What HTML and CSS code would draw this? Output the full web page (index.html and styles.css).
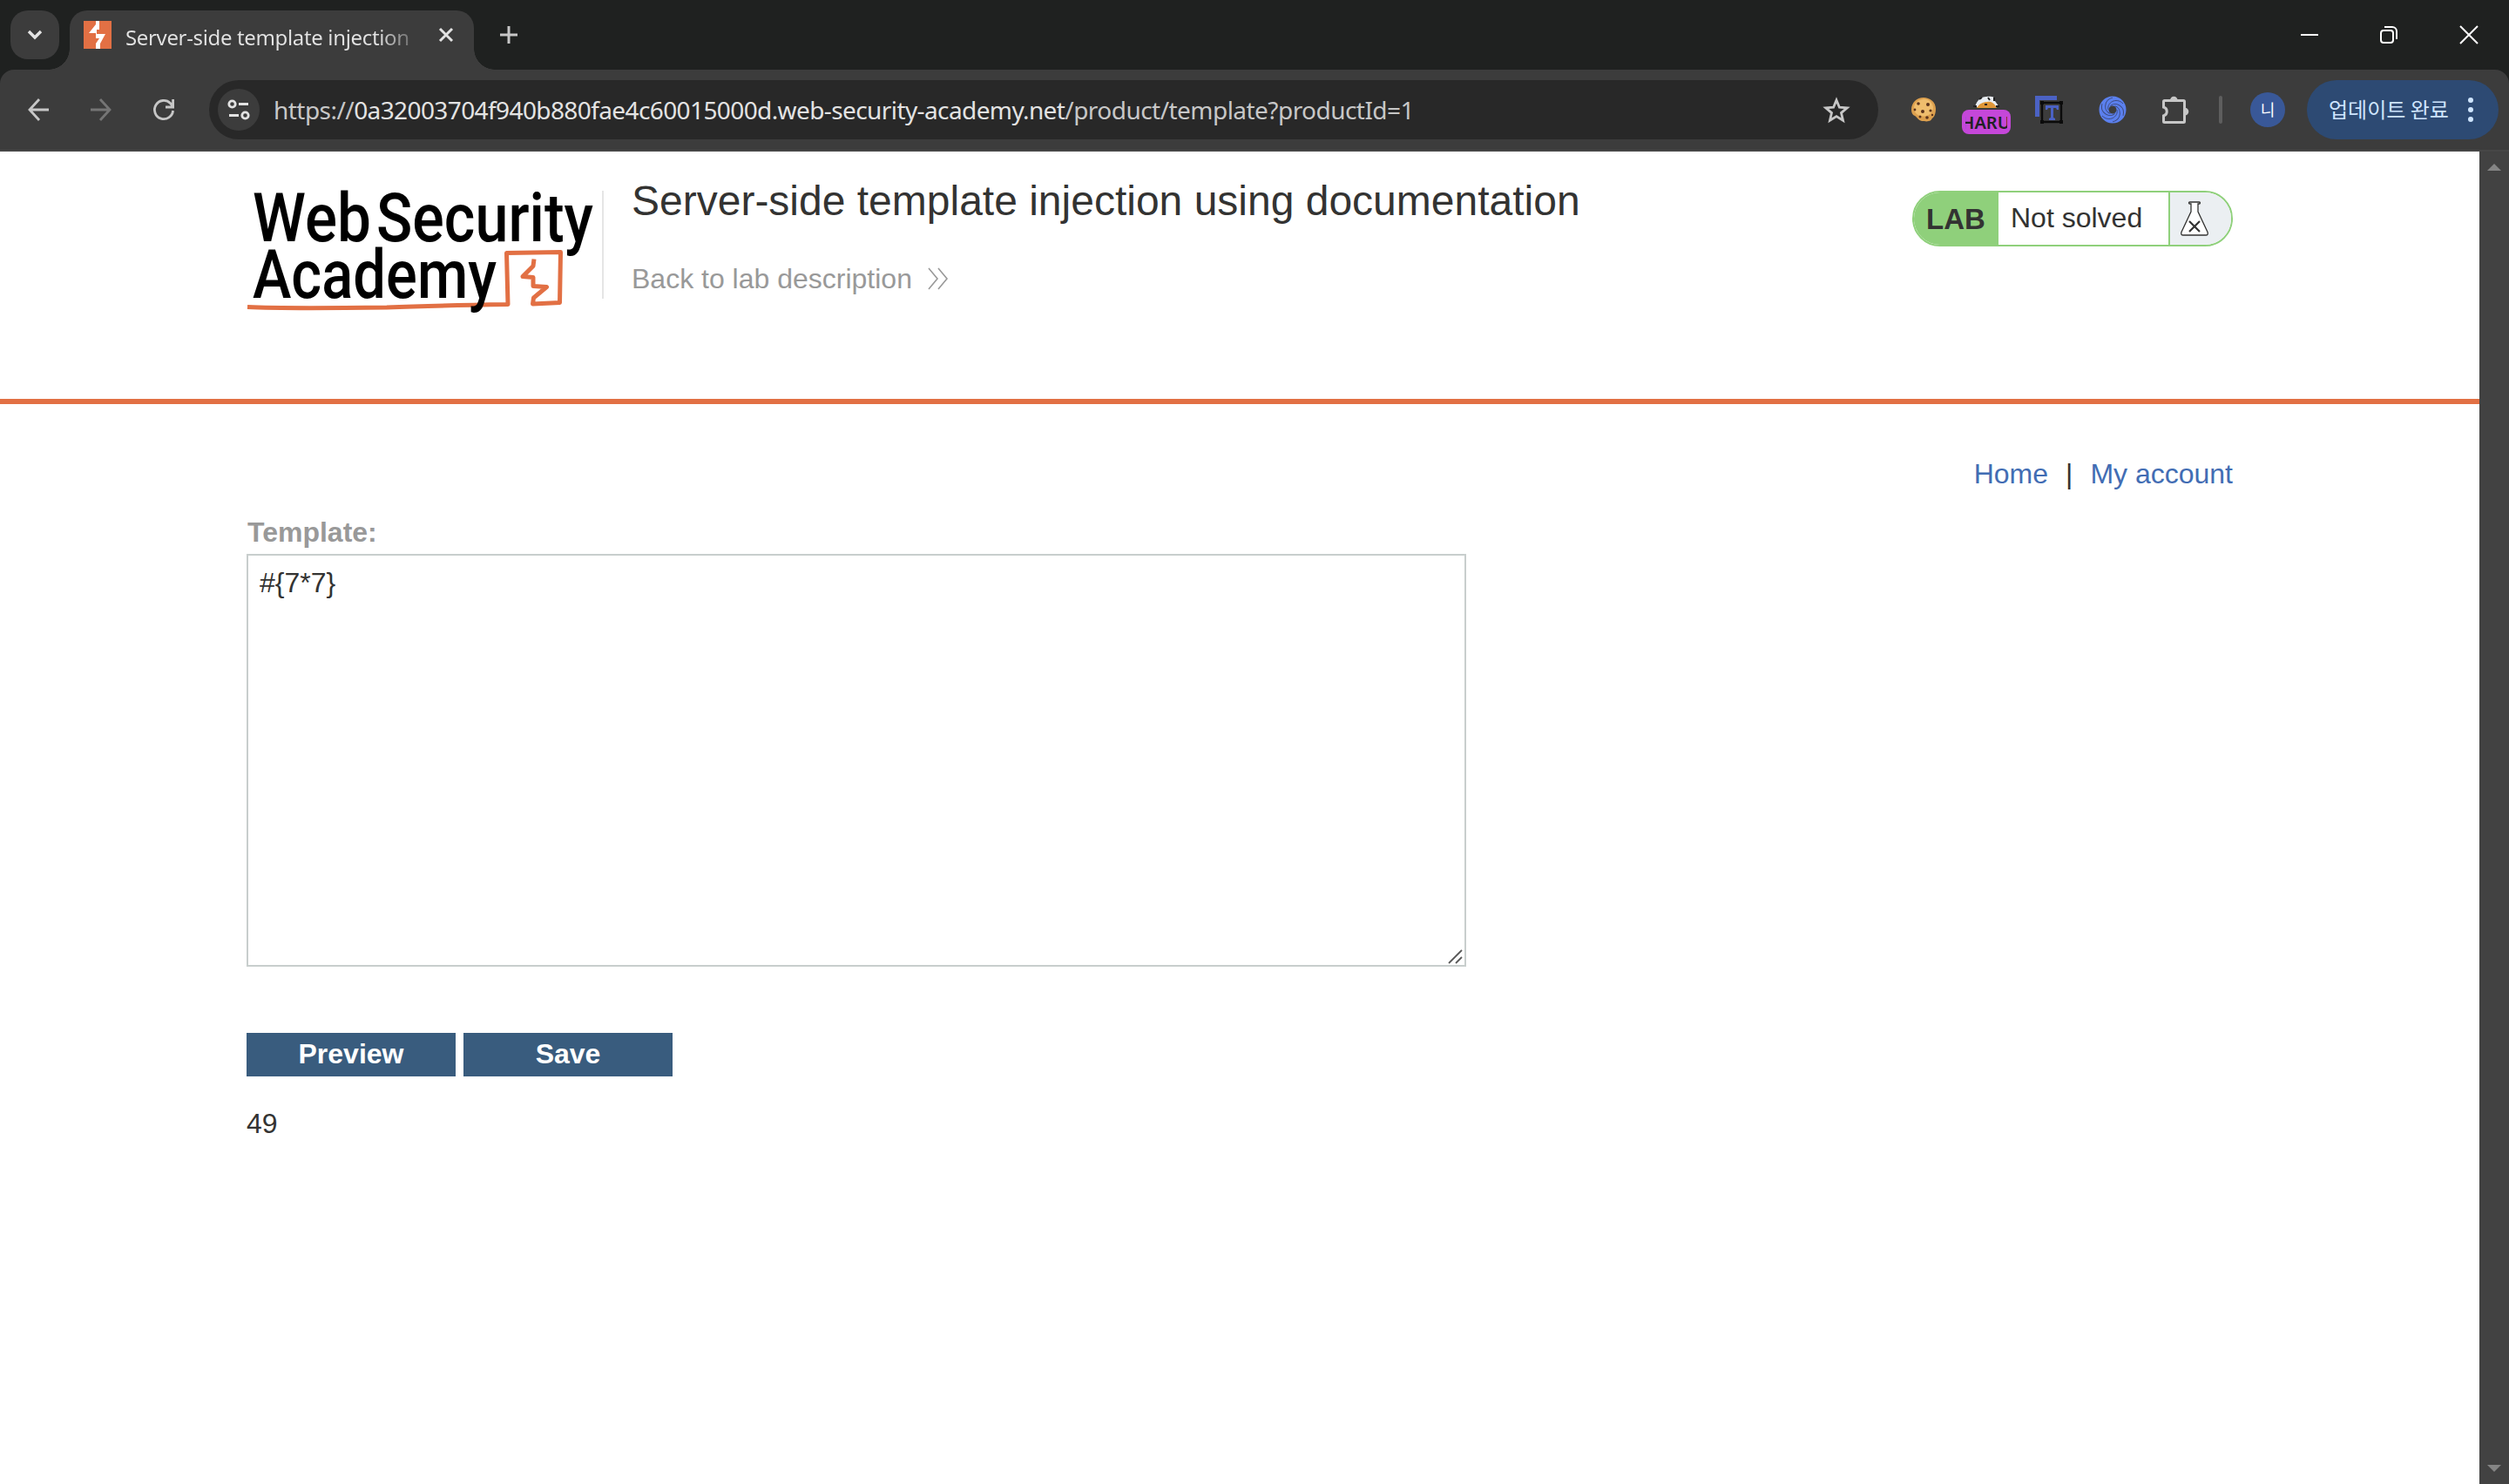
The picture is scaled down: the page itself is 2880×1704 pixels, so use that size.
FILE: index.html
```html
<!DOCTYPE html>
<html lang="en">
  <head>
    <meta charset="UTF-8" />
    <title>Server-side template injection using documentation</title>
    <link rel="stylesheet" href="styles.css">
  </head>
  <body>
    <div class="titlebar">
      <div class="tab-search">
        <svg width="20" height="14" viewBox="0 0 20 14"><path d="M3 3l7 7 7-7" fill="none" stroke="#e3e3e3" stroke-width="3.4" /></svg>
      </div>
      <div class="tab">
        <svg class="favicon" width="32" height="32" viewBox="0 0 32 32">
          <rect width="32" height="32" fill="#e27044" />
          <path d="M14 0h4v10h-3v5h10l-6 11v6h-5v-6l4-6h-4v-6H6l8-10z" fill="#fff" />
        </svg>
        <span class="tab-title">Server-side template injection</span>
        <svg class="tab-close" width="16" height="16" viewBox="0 0 16 16"><path d="M1 1l14 14M15 1L1 15" stroke="#e3e3e3" stroke-width="3" /></svg>
      </div>
      <svg class="new-tab" width="20" height="20" viewBox="0 0 20 20"><path d="M10 0v20M0 10h20" stroke="#c7c7c7" stroke-width="3" /></svg>
      <div class="window-buttons">
        <svg width="20" height="20" viewBox="0 0 20 20"><path d="M1 10h20" stroke="#fff" stroke-width="2" /></svg>
        <svg width="20" height="20" viewBox="0 0 20 20" fill="none" stroke="#fff" stroke-width="2">
          <rect x="1" y="5" width="14" height="14" rx="3" />
          <path d="M5 1h9a5 5 0 0 1 5 5v9" />
        </svg>
        <svg width="20" height="20" viewBox="0 0 20 20"><path d="M0 0l20 20M20 0L0 20" stroke="#fff" stroke-width="2" /></svg>
      </div>
    </div>

    <div class="toolbar-wrap">
      <div class="toolbar">
        <div class="nav-buttons">
          <svg width="24" height="28" viewBox="0 0 24 28" fill="none" stroke="#c7c7c7" stroke-width="2.8"><path d="M24 14H2M13 2L2 14l11 12" /></svg>
          <svg width="24" height="28" viewBox="0 0 24 28" fill="none" stroke="#757575" stroke-width="2.8"><path d="M0 14h22M11 2l11 12-11 12" /></svg>
          <svg width="24" height="24" viewBox="0 0 24 24" fill="none" stroke="#c7c7c7" stroke-width="2.8"><path d="M22.600 13A10.600 10.600 0 1 1 19.500 4.500L22.500 8M22.600 0v9H14" /></svg>
        </div>
        <div class="omnibox">
          <div class="site-info">
            <svg width="26" height="24" viewBox="0 0 26 24" fill="none" stroke="#e3e3e3" stroke-width="2.8">
              <circle cx="5.500" cy="5.500" r="3.700" />
              <path d="M13 5.500h11M2 18.500h11" />
              <circle cx="20.500" cy="18.500" r="3.700" />
            </svg>
          </div>
          <span class="url">https://<b>0a32003704f940b880fae4c60015000d.web-security-academy.net</b>/product/template?productId=1</span>
          <svg class="star" width="32" height="30" viewBox="0 0 32 30"><path d="M16 4l3.400 8.200 8.800.7-6.700 5.700 2 8.600L16 22.600l-7.500 4.600 2-8.600-6.700-5.700 8.800-.7z" fill="none" stroke="#c7c7c7" stroke-width="2.8" /></svg>
        </div>
        <div class="extensions">
          <svg width="30" height="30" viewBox="0 0 30 30">
            <path d="M15 1c7 0 14 5 14 13 0 4-1 8-3 10-2 1-2 4-5 4-3 1-5 0-8 0-4-1-5-4-8-6-3-1-4-4-4-7C1 7 7 1 15 1z" fill="#dda04e" />
            <path d="M14 3c6-1 11 3 12 9 0 5-3 9-8 10-7 2-14-2-14-9 0-5 4-9 10-10z" fill="#efbd6d" />
            <g fill="#5b331c">
              <circle cx="9" cy="8" r="1.800" /><circle cx="20" cy="9" r="2" /><circle cx="5" cy="15" r="1.400" /><circle cx="14" cy="17" r="2" />
              <circle cx="23" cy="16" r="1.600" /><circle cx="11" cy="23" r="1.500" /><circle cx="19" cy="24" r="1.800" /><circle cx="25" cy="21" r="1.200" />
            </g>
          </svg>
          <div class="badged">
            <svg width="32" height="16" viewBox="0 0 32 16">
              <path d="M3 13C5 5 10 1 16 1c6-1 10 0 10 5l5 7z" fill="#e9edf2" />
              <path d="M5 14c3-5 7-7 12-7 5-1 9 2 11 7z" fill="#df9637" />
              <path d="M8 4l3-2M18 2l2 3M25 2v4M27 12h4M1 12h4M14 10h3" stroke="#222" stroke-width="2" />
            </svg>
            <span class="badge"><span>HARU</span></span>
          </div>
          <svg width="32" height="32" viewBox="0 0 32 32">
            <path d="M0 0h25v5H5v19H0z" fill="#4b62c4" />
            <path d="M12 11h15v5h-2l-1-2h-3v11l2 1v2h-7v-2l2-1V14h-3l-1 2h-2z" fill="#4b62c4" />
            <path d="M8 8h22v22H8z" fill="none" stroke="#0b0b0b" stroke-width="2.400" />
            <path d="M6 6h4v4H6zM28 6h4v4h-4zM6 28h4v4H6zM28 28h4v4h-4z" fill="#0b0b0b" />
          </svg>
          <svg width="32" height="32" viewBox="0 0 32 32">
            <circle cx="16" cy="16" r="10" fill="none" stroke="#5b80ee" stroke-width="11" />
            <g fill="none" stroke="#3b4574" stroke-width="0.900">
              <path id="arm" d="M11 16C9 8 20 1 28 9" />
              <use href="#arm" transform="rotate(60 16 16)" />
              <use href="#arm" transform="rotate(120 16 16)" />
              <use href="#arm" transform="rotate(180 16 16)" />
              <use href="#arm" transform="rotate(240 16 16)" />
              <use href="#arm" transform="rotate(300 16 16)" />
            </g>
          </svg>
          <svg width="32" height="32" viewBox="0 0 32 32">
            <path d="M3.500 5.500h22a1 1 0 0 1 1 1v23a1 1 0 0 1-1 1h-22a1 1 0 0 1-1-1v-6.500a5.200 5.200 0 0 0 0-10v-6.500a1 1 0 0 1 1-1z" fill="none" stroke="#c7c7c7" stroke-width="3" />
            <path d="M10 5a4.300 4.300 0 0 1 8.600 0zM27 13.800a4.300 4.300 0 0 1 0 8.600z" fill="#c7c7c7" />
          </svg>
        </div>
        <div class="separator"></div>
        <div class="avatar">니</div>
        <div class="update">
          <span>업데이트 완료</span>
          <svg width="6" height="28" viewBox="0 0 6 28" fill="#cfe5ff"><circle cx="3" cy="3" r="3" /><circle cx="3" cy="14" r="3" /><circle cx="3" cy="25" r="3" /></svg>
        </div>
      </div>
    </div>

    <div class="viewport">
      <div class="page">
        <div class="academy-header">
          <svg class="logo" width="408" height="150" viewBox="283 210 408 150">
            <g class="logo-text">
              <text x="290" y="277" textLength="136" lengthAdjust="spacingAndGlyphs">Web</text>
              <text x="432" y="277" textLength="249" lengthAdjust="spacingAndGlyphs">Security</text>
            </g>
            <path d="M284 352.500q40 2 160 .5 50-2 139-3.500l-1.500-59 62-1-1 58-31 1.500 1-7 15-12.500-15.500-1v-10l-12-1 12-12 1-8" class="logo-line" />
            <g class="logo-text">
              <text x="290" y="342" textLength="280" lengthAdjust="spacingAndGlyphs">Academy</text>
            </g>
          </svg>
          <div class="title-container">
            <h2>Server-side template injection using documentation</h2>
            <a class="link-back" href="#">
              Back to lab description
              <svg width="24" height="26" viewBox="0 0 24 26" fill="none" stroke="#999" stroke-width="1.600"><path d="M1 1l10 12L1 25M12 1l10 12-10 12" /></svg>
            </a>
          </div>
          <div class="lab-status">
            <span class="lab">LAB</span>
            <p>Not solved</p>
            <span class="lab-icon">
              <svg width="32" height="40" viewBox="0 0 32 40">
                <path d="M10.500 1h11a1 1 0 0 1 0 2h-1.500v9l11 23.500q1 3.500-2 3.500H3q-3 0-2-3.500L12 12V3h-1.500a1 1 0 0 1 0-2z" fill="#fff" stroke="#333332" stroke-width="1.300" />
                <path d="M10 23l12 12M22 23L10 35" stroke="#333332" stroke-width="2.200" />
              </svg>
            </span>
          </div>
        </div>

        <div class="container">
          <div class="top-links">
            <a href="#">Home</a><span>|</span><a href="#">My account</a>
          </div>
          <form>
            <label for="template">Template:</label>
            <div class="field">
              <textarea id="template" spellcheck="false">#{7*7}</textarea>
              <svg class="resizer" width="18" height="18" viewBox="0 0 18 18"><path d="M1 17L16 2M9 17l7-7" stroke="#5a5a5a" stroke-width="1.800" /></svg>
            </div>
            <div class="buttons">
              <button type="button">Preview</button>
              <button type="button">Save</button>
            </div>
          </form>
          <div class="preview-result">49</div>
        </div>
      </div>
      <div class="scrollbar">
        <svg width="16" height="8" viewBox="0 0 16 8"><path d="M8 0l8 8H0z" fill="#858585" /></svg>
        <svg width="16" height="8" viewBox="0 0 16 8"><path d="M0 0h16L8 8z" fill="#858585" /></svg>
      </div>
    </div>
  </body>
</html>
```
FILE: styles.css
```css
* {
  box-sizing: border-box;
}
body {
  margin: 0;
  height: 1704px;
  overflow: hidden;
  display: flex;
  flex-direction: column;
  background-color: white;
  color: #333332;
  font-family: "Liberation Sans", Arial, sans-serif;
  font-size: 32px;
}
svg {
  display: block;
  flex-shrink: 0;
  overflow: visible;
}
a {
  text-decoration: none;
}

/* Browser frame */
.titlebar {
  height: 80px;
  display: flex;
  align-items: flex-start;
  background-color: #1f2120;
  padding-left: 12px;
}
.tab-search {
  width: 56px;
  height: 56px;
  margin: 12px 12px 0 0;
  border-radius: 20px;
  background-color: #3c3c3c;
  display: flex;
  align-items: center;
  justify-content: center;
}
.tab {
  position: relative;
  width: 464px;
  height: 68px;
  margin-top: 12px;
  padding: 0 24px 0 16px;
  border-radius: 20px 20px 0 0;
  background-color: #3c3c3c;
  display: flex;
}
/* Curved feet on both sides of the active tab */
.tab::before,
.tab::after {
  content: "";
  position: absolute;
  bottom: 0;
  width: 24px;
  height: 24px;
}
.tab::before {
  left: -24px;
  background: radial-gradient(circle at 0 0, transparent 23.5px, #3c3c3c 24px);
}
.tab::after {
  right: -24px;
  background: radial-gradient(circle at 100% 0, transparent 23.5px, #3c3c3c 24px);
}
.favicon {
  margin-top: 12px;
}
.tab-title {
  width: 328px;
  margin: 14px 0 0 16px;
  overflow: hidden;
  white-space: nowrap;
  font-family: "Noto Sans", sans-serif;
  font-size: 24px;
  line-height: 34px;
  letter-spacing: -0.35px;
  color: transparent;
  background: linear-gradient(to right, #e3e3e3 290px, #6a6a6a 328px);
  background-clip: text;
  -webkit-background-clip: text;
}
.tab-close {
  margin: 20px 0 0 auto;
}
.new-tab {
  margin: 30px 0 0 30px;
}
.window-buttons {
  display: flex;
  gap: 72px;
  margin: 30px 36px 0 auto;
}
.toolbar-wrap {
  background-color: #1f2120;
}
.toolbar {
  height: 94px;
  padding: 0 12px 0 32px;
  display: flex;
  align-items: center;
  background-color: #3c3c3c;
  border-bottom: 2px solid #474747;
  border-radius: 16px 16px 0 0;
}
.nav-buttons {
  display: flex;
  align-items: center;
  gap: 48px;
  width: 208px;
}
.omnibox {
  width: 1916px;
  height: 68px;
  padding: 0 32px 0 10px;
  border-radius: 34px;
  background-color: #282828;
  display: flex;
  align-items: center;
}
.site-info {
  width: 48px;
  height: 48px;
  border-radius: 50%;
  background-color: #3c3c3c;
  display: flex;
  align-items: center;
  justify-content: center;
}
.url {
  margin-left: 16px;
  font-family: "Noto Sans", sans-serif;
  font-size: 28px;
  line-height: 38px;
  letter-spacing: -0.54px;
  color: #c7c7c7;
  white-space: nowrap;
}
.url b {
  font-weight: normal;
  letter-spacing: -0.6px;
  color: #e3e3e3;
}
.star {
  margin-left: auto;
}
.extensions {
  display: flex;
  align-items: center;
  margin-left: 37px;
  gap: 40.5px;
}
.badged {
  position: relative;
  height: 32px;
}
.badge {
  position: absolute;
  left: -12px;
  top: 16px;
  width: 56px;
  height: 28px;
  padding: 0 4px;
  border-radius: 8px;
  background-color: #c547d9;
}
.badge span {
  display: flex;
  justify-content: center;
  overflow: hidden;
  font-family: "Noto Sans", sans-serif;
  font-size: 20px;
  font-weight: 600;
  line-height: 29px;
  color: #202124;
}
.separator {
  width: 4px;
  height: 32px;
  margin: 0 32px 0 34px;
  border-radius: 2px;
  background-color: #5e5e5e;
}
.avatar {
  width: 40px;
  height: 40px;
  border-radius: 50%;
  background-color: #395898;
  color: white;
  font-family: "Noto Sans CJK KR", sans-serif;
  font-size: 18px;
  line-height: 38px;
  text-align: center;
}
.update {
  width: 220px;
  height: 68px;
  margin-left: auto;
  padding: 0 29px 0 25px;
  border-radius: 34px;
  background-color: #2d4a73;
  color: #cfe5ff;
  display: flex;
  align-items: center;
  justify-content: space-between;
  font-family: "Noto Sans CJK KR", sans-serif;
  font-size: 24px;
  font-weight: 400;
  white-space: nowrap;
}
.update span {
  padding-bottom: 3px;
}

/* Page */
.viewport {
  flex: 1;
  display: flex;
}
.page {
  flex: 1;
}
.scrollbar {
  width: 34px;
  padding: 14px 0;
  background-color: #424242;
  display: flex;
  flex-direction: column;
  align-items: center;
  justify-content: space-between;
}
.academy-header {
  height: 290px;
  padding: 36px 283px 0;
  border-bottom: 6px solid #e27044;
  display: flex;
  align-items: flex-start;
}
.logo-text {
  font-family: Roboto, sans-serif;
  font-size: 77.5px;
  font-weight: 500;
}
.logo-line {
  fill: none;
  stroke: #e27044;
  stroke-width: 5;
  stroke-linejoin: round;
}
.title-container {
  height: 124px;
  margin-top: 9px;
  padding-left: 32px;
  border-left: 2px solid #e5e5e5;
}
h2 {
  margin: -16px 0 0;
  font-size: 48px;
  font-weight: normal;
  line-height: 56px;
  white-space: nowrap;
}
.link-back {
  display: flex;
  align-items: center;
  gap: 18px;
  margin-top: 42px;
  line-height: 38px;
  color: #999;
}
.lab-status {
  width: 368px;
  height: 64px;
  margin: 9px 0 0 auto;
  border: 2px solid #8fd07b;
  border-radius: 32px;
  overflow: hidden;
  display: flex;
  line-height: 58px;
}
.lab {
  width: 97px;
  padding-left: 14px;
  background-color: #8fd07b;
  font-size: 33px;
  font-weight: bold;
  line-height: 62px;
}
.lab-status p {
  width: 197px;
  margin: 0;
  padding-left: 14px;
  border-right: 2px solid #8fd07b;
}
.lab-icon {
  flex: 1;
  padding: 10px 0 0 12px;
  background-color: #ebeff2;
}
.container {
  padding: 62px 283px 0;
}
.top-links {
  display: flex;
  justify-content: flex-end;
  gap: 20px;
  line-height: 36px;
}
.top-links a {
  color: #426db4;
}
label {
  display: block;
  margin-top: 31px;
  padding-left: 1px;
  font-weight: bold;
  line-height: 36px;
  color: #999;
}
.field {
  position: relative;
  width: 1400px;
  height: 474px;
  margin-top: 7px;
}
textarea {
  display: block;
  width: 100%;
  height: 100%;
  padding: 13px;
  border: 2px solid #c8cecd;
  border-radius: 0;
  outline: none;
  resize: none;
  font: inherit;
  line-height: 36px;
  color: #333332;
}
.resizer {
  position: absolute;
  right: 3px;
  bottom: 3px;
}
.buttons {
  display: flex;
  gap: 9px;
  margin-top: 76px;
}
button {
  width: 240px;
  height: 50px;
  padding: 0 0 2px;
  border: 0;
  background-color: #395c7e;
  color: white;
  font: inherit;
  font-weight: bold;
  line-height: 48px;
}
.preview-result {
  margin-top: 36px;
  line-height: 36px;
}
```
